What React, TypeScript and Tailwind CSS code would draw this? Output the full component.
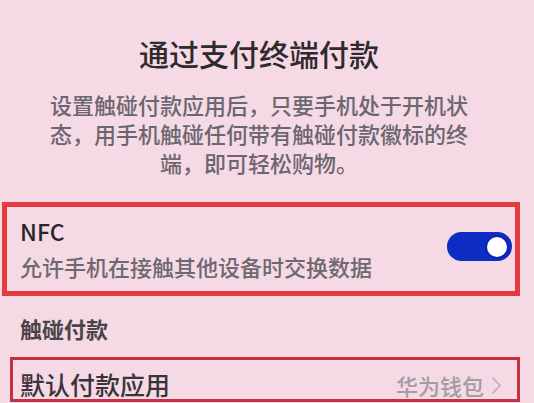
const font = { fontFamily: '"Noto Sans CJK SC", "Noto Sans", sans-serif' };

export default function App() {
  return (
    <div
      style={font}
      className="w-[534px] h-[403px] overflow-hidden bg-[#f5d9e4] flex flex-col"
    >
      {/* Header */}
      <div className="pl-[44px] pr-[60px] pt-[35px] flex flex-col items-center text-center">
        <h1 className="text-[30px] leading-[36px] font-medium text-[#2e2a2e]">通过支付终端付款</h1>
        <p className="mt-[19px] text-[22px] leading-[29px] font-medium text-[#6c6670]">
          设置触碰付款应用后，只要手机处于开机状态，用手机触碰任何带有触碰付款徽标的终端，即可轻松购物。
        </p>
      </div>

      {/* NFC row */}
      <div className="ml-[2px] mt-[25px] w-[518px] h-[94px] border-[5px] border-[#e63a40] flex items-center pl-[13px] pr-[3px]">
        <div className="flex-1 -mt-[1px]">
          <div className="text-[23px] leading-[28px] font-medium text-[#2a262a]">NFC</div>
          <div className="mt-[7px] text-[22px] leading-[28px] font-medium text-[#6e6870]">
            允许手机在接触其他设备时交换数据
          </div>
        </div>
        <div className="-mt-[5px] w-[65px] h-[29px] rounded-full bg-[#0c2cc4] flex items-center justify-end pr-[3px]">
          <div className="w-[24px] h-[24px] rounded-full bg-white border-[2px] border-[#0a26b0]" />
        </div>
      </div>

      {/* Section title */}
      <div className="mt-[18px] pl-[20px] text-[22px] leading-[28px] font-bold text-[#4a4448]">
        触碰付款
      </div>

      {/* Default app row */}
      <div className="ml-[10px] mt-[15px] w-[510px] h-[45px] border-[3px] border-[#c4323f] flex items-start pt-[9px] pl-[7px] pr-[16px]">
        <div className="flex-1 text-[25px] leading-[30px] font-medium text-[#3a3438]">默认付款应用</div>
        <div className="flex items-center gap-[8px] mt-[2px]">
          <span className="text-[22px] leading-[28px] font-medium text-[#a39ca2]">华为钱包</span>
          <svg width="9" height="17" viewBox="0 0 9 17" fill="none">
            <path d="M1 1L8 8.5L1 16" stroke="#b3acb2" strokeWidth="1.5" strokeLinecap="round" strokeLinejoin="round" />
          </svg>
        </div>
      </div>
    </div>
  );
}
